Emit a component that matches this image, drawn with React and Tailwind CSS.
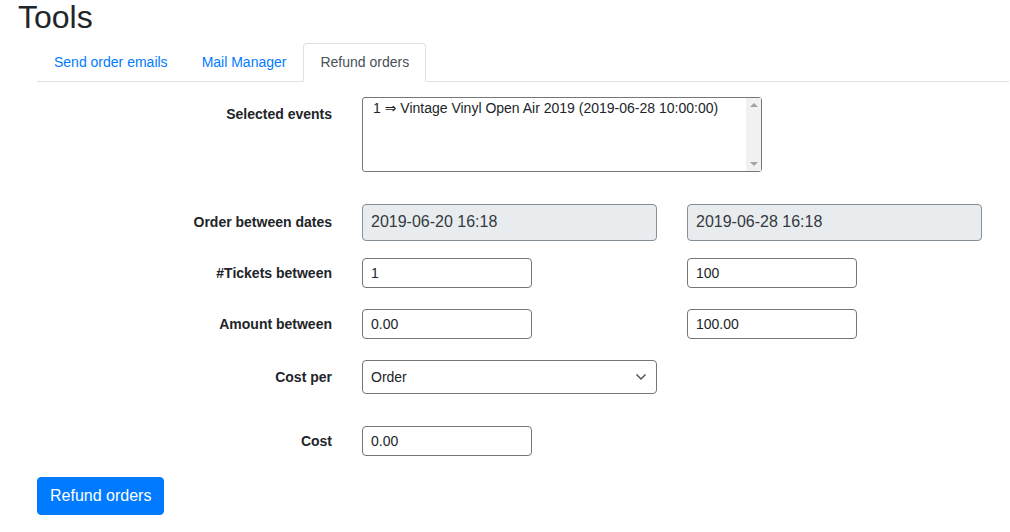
import { useState } from 'react'

const font = { fontFamily: '"Liberation Sans", "DejaVu Sans", Arial, sans-serif' }

function Label({ children, top }) {
  return (
    <div className={`w-[295px] shrink-0 text-right text-[14px] font-bold leading-[21px] text-[#212529] ${top ? 'pt-[7px]' : ''}`}>
      {children}
    </div>
  )
}

function SmallInput({ value }) {
  return (
    <input
      readOnly
      value={value}
      className="h-[30px] w-[170px] rounded-[4px] border border-[#767676] bg-white px-[8px] text-[14px] text-[#212529] outline-none"
    />
  )
}

function DateInput({ value }) {
  return (
    <div className="flex h-[37px] w-[295px] items-center rounded-[4px] border border-[#868e96] bg-[#e9ecef] px-[8px] pb-px text-[16px] text-[#343a40]">
      {value}
    </div>
  )
}

export default function App() {
  const [tab, setTab] = useState('refund')
  const tabs = [
    { id: 'emails', label: 'Send order emails' },
    { id: 'mail', label: 'Mail Manager' },
    { id: 'refund', label: 'Refund orders' },
  ]

  return (
    <div className="min-h-[532px] bg-white" style={font}>
      <h1 className="mt-px pl-[18px] text-[32px] font-normal leading-none text-[#212529]">Tools</h1>

      <div className="pl-[37px] pr-px">
        {/* tabs */}
        <ul className="mt-[10px] flex border-b border-[#dee2e6]">
          {tabs.map((t) => (
            <li key={t.id} className="-mb-px">
              <button
                onClick={() => setTab(t.id)}
                className={`block rounded-t-[4px] border px-[16px] py-[8px] text-[14px] leading-[21px] ${
                  tab === t.id
                    ? 'border-[#dee2e6] border-b-white bg-white text-[#495057]'
                    : 'border-transparent text-[#007bff]'
                }`}
              >
                {t.label}
              </button>
            </li>
          ))}
        </ul>

        {/* form */}
        <div className="mt-[15px] flex items-start gap-[30px]">
          <Label top>Selected events</Label>
          <div className="flex h-[75px] w-[400px] rounded-[3px] border border-[#767676] bg-white">
            <div className="flex-1 pl-[10px] pt-px text-[14px] leading-[18px] text-[#212529]">
              1 ⇒ Vintage Vinyl Open Air 2019 (2019-06-28 10:00:00)
            </div>
            <div className="flex w-[15px] flex-col items-center justify-between bg-[#f1f1f1] py-[5px]">
              <div className="h-0 w-0 border-x-[4px] border-b-[4px] border-x-transparent border-b-[#a3a3a3]" />
              <div className="h-0 w-0 border-x-[4px] border-t-[4px] border-x-transparent border-t-[#a3a3a3]" />
            </div>
          </div>
        </div>

        <div className="mt-[32px] flex items-center gap-[30px]">
          <Label>Order between dates</Label>
          <DateInput value="2019-06-20 16:18" />
          <DateInput value="2019-06-28 16:18" />
        </div>

        <div className="mt-[17px] flex items-center gap-[30px]">
          <Label>#Tickets between</Label>
          <div className="w-[295px]">
            <SmallInput value="1" />
          </div>
          <SmallInput value="100" />
        </div>

        <div className="mt-[21px] flex items-center gap-[30px]">
          <Label>Amount between</Label>
          <div className="w-[295px]">
            <SmallInput value="0.00" />
          </div>
          <SmallInput value="100.00" />
        </div>

        <div className="mt-[21px] flex items-center gap-[30px]">
          <Label>Cost per</Label>
          <div className="flex h-[34px] w-[295px] items-center justify-between rounded-[4px] border border-[#767676] bg-white pl-[8px] pr-[9px] text-[14px] text-[#212529]">
            <span>Order</span>
            <svg width="12" height="8" viewBox="0 0 12 8" fill="none" stroke="#555" strokeWidth="1.5">
              <path d="M1.5 1.5 L6 6 L10.5 1.5" />
            </svg>
          </div>
        </div>

        <div className="mt-[32px] flex items-center gap-[30px]">
          <Label>Cost</Label>
          <SmallInput value="0.00" />
        </div>

        <button className="mt-[21px] h-[38px] rounded-[4px] border border-[#007bff] bg-[#007bff] px-[12px] text-[16px] leading-[24px] text-white">
          Refund orders
        </button>
      </div>
    </div>
  )
}
